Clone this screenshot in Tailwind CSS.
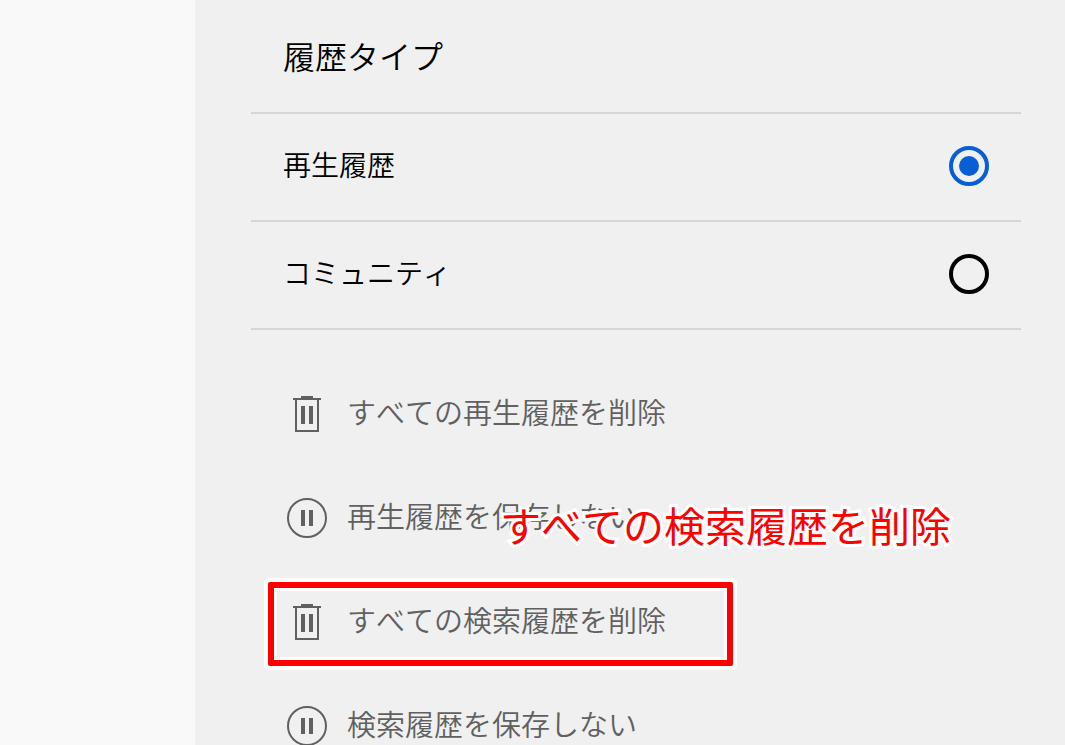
<!DOCTYPE html>
<html lang="ja">
<head>
<meta charset="utf-8">
<meta name="viewport" content="width=device-width, initial-scale=1">
<title>履歴</title>
<script src="https://cdn.jsdelivr.net/npm/@tailwindcss/browser@4"></script>
</head>
<body class="flex h-screen overflow-hidden bg-[#f9f9f9] font-['Noto_Sans_CJK_JP',sans-serif] font-[350] text-black [font-kerning:none]">
<svg class="hidden" aria-hidden="true">
  <symbol id="trash" viewBox="0 0 48 48"><path fill="currentColor" fill-rule="evenodd" d="M18 6h12v2h8v2h-2v32H12V10h-2V8h8zM14 10v30h20V10zM18 16h4v18h-4zM26 16h4v18h-4z"/></symbol>
  <symbol id="pause" viewBox="0 0 48 48"><circle cx="24" cy="24" r="19" fill="none" stroke="currentColor" stroke-width="2"/><path fill="currentColor" d="M18 16h4v16h-4zM26 16h4v16h-4z"/></symbol>
</svg>
<main class="ml-[195px] min-h-screen flex-1 bg-[#f0f0f0] pr-11 pl-14">
  <h1 id="history-type" class="flex h-[114px] items-center border-b-2 border-[#d6d6d6] px-8 pb-0.5 text-[32px]">履歴タイプ</h1>
  <fieldset aria-labelledby="history-type">
    <label class="flex h-27 items-center justify-between border-b-2 border-[#d6d6d6] px-8 pb-0.5 text-[28px]"><span class="pb-1">再生履歴</span>
      <input type="radio" name="type" checked class="size-10 appearance-none rounded-full border-4 border-black bg-clip-content p-1.5 checked:border-[#065fd4] checked:bg-[#065fd4]">
    </label>
    <label class="flex h-27 items-center justify-between border-b-2 border-[#d6d6d6] px-8 pb-0.5 text-[28px]"><span class="pb-1">コミュニティ</span>
      <input type="radio" name="type" class="size-10 appearance-none rounded-full border-4 border-black bg-clip-content p-1.5 checked:border-[#065fd4] checked:bg-[#065fd4]">
    </label>
  </fieldset>
  <div class="flex flex-col items-start px-8 pt-8 text-[29px] whitespace-nowrap text-[#606060]">
    <button type="button" class="flex h-26 items-center gap-4"><svg class="size-12" aria-hidden="true"><use href="#trash"/></svg><span class="pb-1">すべての再生履歴を削除</span></button>
    <div class="relative">
      <button type="button" class="flex h-26 items-center gap-4"><svg class="size-12" aria-hidden="true"><use href="#pause"/></svg><span class="pb-1">再生履歴を保存しない</span></button>
      <p class="absolute top-7 left-[217px] z-10 text-[41px] font-normal text-[red] [-webkit-text-stroke:6px_white] [paint-order:stroke_fill]">すべての検索履歴を削除</p>
    </div>
    <div class="relative">
      <button type="button" class="flex h-26 items-center gap-4"><svg class="size-12" aria-hidden="true"><use href="#trash"/></svg><span class="pb-1">すべての検索履歴を削除</span></button>
      <div class="pointer-events-none absolute top-3 -left-[15px] h-[84px] w-[465px] rounded-xs border-6 border-[red] ring-4 ring-white inset-ring-3 inset-ring-white"></div>
    </div>
    <button type="button" class="flex h-26 items-center gap-4"><svg class="size-12" aria-hidden="true"><use href="#pause"/></svg><span class="pb-1">検索履歴を保存しない</span></button>
  </div>
</main>
</body>
</html>
